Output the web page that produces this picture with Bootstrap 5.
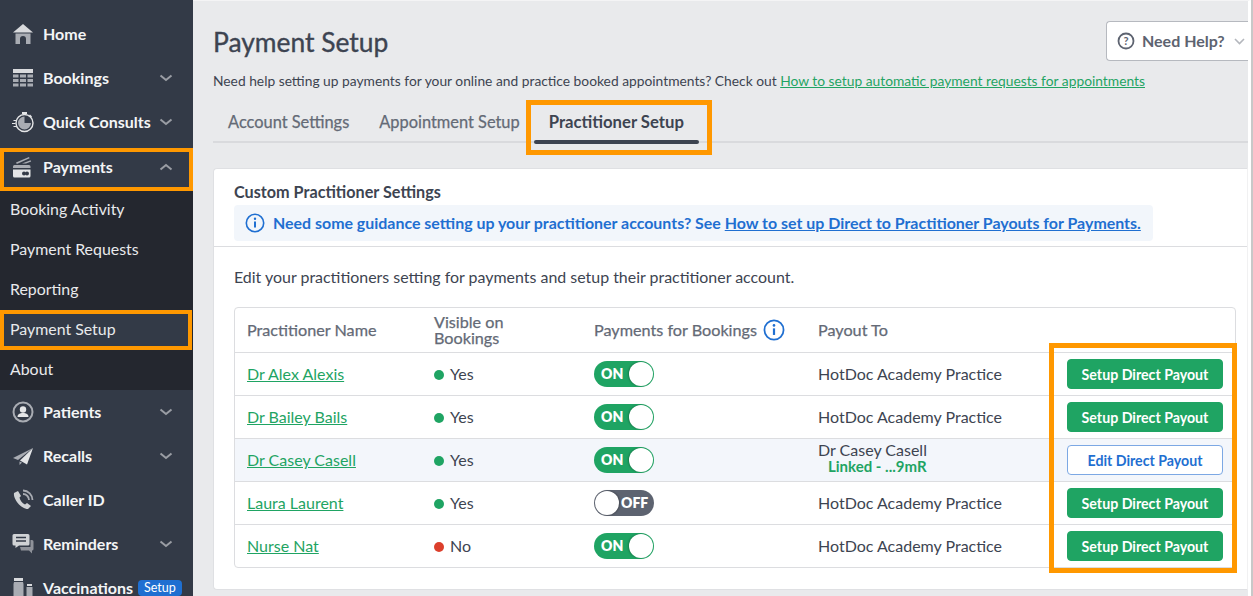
<!DOCTYPE html>
<html lang="en">
<head>
<meta charset="utf-8">
<title>Payment Setup</title>
<link rel="stylesheet" href="https://cdn.jsdelivr.net/npm/bootstrap@5.3.0/dist/css/bootstrap.min.css">
<style>
html,body{height:596px;overflow:hidden}
body{font-family:Lato,"Liberation Sans",sans-serif;background:#fff;color:#3d4451;font-size:16px}
.shell{height:596px;overflow:hidden}
.side{width:193px;flex:none;background:#333a47;color:#fff;padding-top:12px;height:596px;overflow:hidden}
.sitem{height:44px;padding:0 20px 0 12px;font-size:16px;font-weight:700;color:#f4f5f6;position:relative}
.sitem svg.ic{width:22px;height:22px;margin-right:9px;flex:none;fill:#a9acb3}
.sitem .chev{width:14px;height:8px;margin-left:auto;flex:none}
.sitem.hl{border:4px solid #ff9800;margin:4px 0 0;padding:0 16px 5px 8px;height:43px;z-index:1}
.subs{background:#24272f;height:201px;margin-top:-2px}
.sub{height:40px;padding-left:10px;font-size:15.9px;color:#e9eaec;line-height:1}
.sub.hl{border:4px solid #ff9800;padding:0 0 2px 6px;margin:1px 1px -1px 0;background:#333a47}
.tagsetup{background:#1f6fd1;color:#fff;font-size:12.5px;border-radius:4px;padding:1px 6px;font-weight:400;margin-left:5px;line-height:14px}
.mainp{flex:1;background:#e9eaec;padding-left:20px;height:596px;overflow:hidden;position:relative;border-top:1px solid #f4f4f5;border-right:3px solid #fff}
.sbar{width:2px;flex:none;background:#c8c8c8}
.ptitle{font-size:26.4px;font-weight:400;-webkit-text-stroke:.35px #3d4451;margin:0;line-height:32px;color:#3d4451;padding-top:25px;box-sizing:content-box}
.helpb{position:absolute;top:20px;right:0;width:142px;height:40px;background:#fff;border:1px solid #b6b9bf;border-right:0;border-radius:4px 0 0 4px;color:#5d6370;font-size:16px;font-weight:700;padding-left:10px}
.helpb svg{width:18px;height:18px;margin-right:7px}
.helpb .hc{width:11px;height:7px;margin-left:9px;margin-right:0}
.leadp{font-size:13.8px;margin:14px 0 0;line-height:18px;color:#3d4451}
.lnk{color:#1fa463;text-decoration:underline}
.ttabs{height:53px;border-bottom:2px solid #d9dadd}
.tabi{font-size:16.4px;color:#646a76;-webkit-text-stroke:.25px #646a76;padding:14px 15px 0;line-height:36px}
.tabi.act{position:relative;font-weight:700;font-size:16.7px;color:#3d4451;-webkit-text-stroke:0;border:5px solid #ff9800;height:55px;flex:none;margin:10px 0 0 -9px;padding:0 0 0 18px;line-height:34px;width:186px}
.tabi.act::after{content:"";position:absolute;left:3px;right:8px;bottom:6px;height:4px;background:#3d4451;border-radius:2px}
.pcard{background:#fff;border:1px solid #dfe0e3;border-right-color:#f1f1f2;border-radius:4px 0 0 4px;margin-top:25px;height:422px}
.phead{height:78px;border-bottom:1px solid #dcdde0;padding:14px 20px 0}
.phead h2{font-size:16.2px;font-weight:700;margin:0;line-height:17px;color:#3d4451}
.guide{background:#f2f6fb;border-radius:4px;color:#1f6fd1;font-weight:700;font-size:15.95px;height:36px;margin-top:5px;width:919px;padding-left:11px;white-space:nowrap}
.guide svg{width:20px;height:20px;margin-right:8px;flex:none}
.guide a{color:#1f6fd1}
.intro{font-size:15.95px;margin:20px 20px 20px;line-height:20px;color:#3d4451}
.tbox{margin:0 11px 0 20px;border:1px solid #dcdde0;border-radius:4px;position:relative;height:261px}
.trow{height:43px;border-top:1px solid #dcdde0;display:grid;grid-template-columns:187px 160px 224px 1fr 168px;align-items:center;padding-left:12px}
.trow.thd{height:44px;border-top:0;color:#646a76;font-size:16.2px;-webkit-text-stroke:.25px #646a76;line-height:16px;padding-bottom:1px}
.trow.alt{background:#f3f6fb}
.trow a{color:#1fa463}
.dotg,.dotr{display:inline-block;width:10px;height:10px;border-radius:50%;margin-right:6px}
.dotg{background:#1fa463}.dotr{background:#dc3f2c}
.tgl{display:inline-flex;align-items:center;width:60px;height:26px;border-radius:13px;background:#1fa463;color:#fff;font-weight:800;font-size:14px;position:relative;padding:0 0 2px 7px;vertical-align:middle}
.tgl i{position:absolute;right:1px;top:1px;width:24px;height:24px;border-radius:50%;background:#fff;box-shadow:-1px 0 2px rgba(0,0,0,.25)}
.tgl.off{background:#5d6370;padding-left:27px}
.tgl.off i{right:auto;left:1px;box-shadow:1px 0 2px rgba(0,0,0,.3)}
.linked{color:#1fa463;font-weight:700;font-size:15px;padding-left:10px;line-height:17px}
.pay2{line-height:17px;padding-bottom:5px}
.btnp{width:156px;height:30px;font-size:14.2px;font-weight:700;padding:1px 0 0;border-radius:4px;line-height:28px}
.btng,.btng:hover{background:#1fa463;border:1px solid #1fa463;color:#fff}
.btnw,.btnw:hover{background:#fff;border:1px solid #7ca8e4;color:#1f6fd1}
.hlcol{position:absolute;left:814px;top:35px;width:188px;height:230px;border:5px solid #ff9800;pointer-events:none}
.infoh{margin-left:6px}
</style>
</head>
<body>
<div class="shell d-flex">
  <nav class="side">
    <div class="sitem d-flex align-items-center"><svg class="ic" viewBox="0 0 22 22"><path fill="#d9dadd" d="M11 1 1 9.500h20z"/><path d="M3.500 10.500h15V21h-4.500v-5a3 3 0 0 0-6 0v5H3.500z"/></svg>Home</div>
    <div class="sitem d-flex align-items-center"><svg class="ic" viewBox="0 0 22 22"><path fill="#d9dadd" d="M1 2h20v4H1z"/><path d="M1 7.500h5.500v3H1zM8 7.500h6v3H8zM15.500 7.500H21v3h-5.500zM1 12h5.500v3H1zM8 12h6v3H8zM15.500 12H21v3h-5.500zM1 16.500h5.500v3H1zM8 16.500h6v3H8zM15.500 16.500H21v3h-5.500z"/></svg>Bookings<svg class="chev" viewBox="0 0 14 8"><path d="M1.500 1.500 7 6l5.500-4.500" fill="none" stroke="#9a9da4" stroke-width="2"/></svg></div>
    <div class="sitem d-flex align-items-center"><svg class="ic" viewBox="0 0 22 22"><circle cx="12.500" cy="12" r="8.500" fill="none" stroke="#e4e5e7" stroke-width="1.400"/><path d="M12.500 5.500a6.500 6.500 0 1 0 6.500 6.500h-6.500z"/><path d="M1.500 9.500h3M0 12.500h3.500M1.500 15.500h3" fill="none" stroke="#e4e5e7" stroke-width="1.200"/><path fill="#e4e5e7" d="M10 1h5v2h-5zM18 3.500l2 2-1 1-2-2z"/></svg>Quick Consults<svg class="chev" viewBox="0 0 14 8"><path d="M1.500 1.500 7 6l5.500-4.500" fill="none" stroke="#9a9da4" stroke-width="2"/></svg></div>
    <div class="sitem hl d-flex align-items-center"><svg class="ic" viewBox="0 0 22 22"><path fill="#a9acb3" d="M4 6.500 17 1l.6 1.300L4.800 8zM10 7.500l8.500-3.300.7 1.400L14 7.500z"/><path fill="#a9acb3" d="M1 10.500a1.500 1.500 0 0 1 1.500-1.500H17a1.500 1.500 0 0 1 1.500 1.500V12H1z"/><path fill="#e4e5e7" d="M1 13.500h17.500V20a1.500 1.500 0 0 1-1.500 1.500H2.500A1.500 1.500 0 0 1 1 20z"/><circle cx="12" cy="17.500" r="2" fill="#333a47"/><circle cx="15" cy="17.500" r="2" fill="#333a47"/></svg>Payments<svg class="chev" viewBox="0 0 14 8"><path d="M1.500 6.500 7 2l5.500 4.500" fill="none" stroke="#9a9da4" stroke-width="2"/></svg></div>
    <div class="subs">
      <div class="sub d-flex align-items-center">Booking Activity</div>
      <div class="sub d-flex align-items-center">Payment Requests</div>
      <div class="sub d-flex align-items-center">Reporting</div>
      <div class="sub hl d-flex align-items-center">Payment Setup</div>
      <div class="sub d-flex align-items-center">About</div>
    </div>
    <div class="sitem d-flex align-items-center"><svg class="ic" viewBox="0 0 22 22"><circle cx="11" cy="11" r="9.500" fill="none" stroke="#a9acb3" stroke-width="2"/><circle cx="11" cy="8.500" r="3.200" fill="#e4e5e7"/><path fill="#e4e5e7" d="M5.500 16c0-3 2.500-4 5.500-4s5.500 1 5.500 4z"/></svg>Patients<svg class="chev" viewBox="0 0 14 8"><path d="M1.500 1.500 7 6l5.500-4.500" fill="none" stroke="#9a9da4" stroke-width="2"/></svg></div>
    <div class="sitem d-flex align-items-center"><svg class="ic" viewBox="0 0 22 22"><path fill="#a9acb3" d="M21 3 1 13l5 2z"/><path fill="#e4e5e7" d="M21 3 8 15.500l7 4z"/><path d="M7.500 16.500V20l2.500-2.500z"/></svg>Recalls<svg class="chev" viewBox="0 0 14 8"><path d="M1.500 1.500 7 6l5.500-4.500" fill="none" stroke="#9a9da4" stroke-width="2"/></svg></div>
    <div class="sitem d-flex align-items-center"><svg class="ic" viewBox="0 0 22 22"><path fill="#d0d2d5" d="M6 2 2 4c-1 6 7 16 14 16l3-3-4-3-2 1.500C10 14 8 11 7.500 8.500L9 7z"/><path d="M11 5a6 6 0 0 1 6 6M11 1.500a9.500 9.500 0 0 1 9.500 9.500" fill="none" stroke="#a9acb3" stroke-width="1.800"/></svg>Caller ID</div>
    <div class="sitem d-flex align-items-center"><svg class="ic" viewBox="0 0 22 22"><path fill="#d0d2d5" d="M2 1h14a1.500 1.500 0 0 1 1.500 1.500V11a1.500 1.500 0 0 1-1.500 1.500H7L3.500 15v-2.500H2A1.500 1.500 0 0 1 .5 11V2.500A1.500 1.500 0 0 1 2 1z"/><path d="M4 4.500h10M4 8h10" stroke="#333a47" stroke-width="1.500"/><path fill="#8f929a" d="M18.500 7H20a1.500 1.500 0 0 1 1.500 1.500V16a1.500 1.500 0 0 1-1.500 1.500v3L17 17.500H9l-1-3.500h10.500z"/></svg>Reminders<svg class="chev" viewBox="0 0 14 8"><path d="M1.500 1.500 7 6l5.500-4.500" fill="none" stroke="#9a9da4" stroke-width="2"/></svg></div>
    <div class="sitem d-flex align-items-center"><svg class="ic" viewBox="0 0 22 22"><path fill="#d9dadd" d="M2 1h9v3H2z"/><path d="M2 5h9l.5 2v14h-10V7z"/><path fill="#d9dadd" d="M15 7h5v2h-5z"/><path d="M14.500 10h6v11h-6z"/></svg>Vaccinations<span class="tagsetup">Setup</span></div>
  </nav>
  <main class="mainp">
    <h1 class="ptitle">Payment Setup</h1>
    <div class="helpb d-flex align-items-center"><svg viewBox="0 0 18 18"><circle cx="9" cy="9" r="7.500" fill="none" stroke="#5d6370" stroke-width="1.800"/><text x="9" y="13" font-size="11" font-weight="700" text-anchor="middle" fill="#5d6370" font-family="Lato">?</text></svg>Need Help?<svg class="hc" viewBox="0 0 11 7"><path d="M1 1l4.500 4.500L10 1" fill="none" stroke="#b4b7bd" stroke-width="1.600"/></svg></div>
    <p class="leadp">Need help setting up payments for your online and practice booked appointments? Check out <a class="lnk" href="#">How to setup automatic payment requests for appointments</a></p>
    <div class="ttabs d-flex">
      <div class="tabi">Account Settings</div>
      <div class="tabi">Appointment Setup</div>
      <div class="tabi act">Practitioner Setup</div>
    </div>
    <section class="pcard">
      <div class="phead">
        <h2>Custom Practitioner Settings</h2>
        <div class="guide d-flex align-items-center"><svg viewBox="0 0 20 20"><circle cx="10" cy="10" r="8.700" fill="none" stroke="#1f6fd1" stroke-width="1.600"/><path d="M10 8.500v6" stroke="#1f6fd1" stroke-width="2"/><circle cx="10" cy="5.800" r="1.200" fill="#1f6fd1"/></svg><span>Need some guidance setting up your practitioner accounts? See <a href="#">How to set up Direct to Practitioner Payouts for Payments.</a></span></div>
      </div>
      <p class="intro">Edit your practitioners setting for payments and setup their practitioner account.</p>
      <div class="tbox">
        <div class="trow thd"><div>Practitioner Name</div><div>Visible on<br>Bookings</div><div class="d-flex align-items-center">Payments for Bookings<svg class="infoh" width="22" height="22" viewBox="0 0 20 20"><circle cx="10" cy="10" r="8.700" fill="none" stroke="#1f6fd1" stroke-width="1.600"/><path d="M10 8.500v6" stroke="#1f6fd1" stroke-width="2"/><circle cx="10" cy="5.800" r="1.200" fill="#1f6fd1"/></svg></div><div>Payout To</div><div></div></div>
        <div class="trow"><a href="#">Dr Alex Alexis</a><div><span class="dotg"></span>Yes</div><div><span class="tgl">ON<i></i></span></div><div>HotDoc Academy Practice</div><div><button class="btn btnp btng">Setup Direct Payout</button></div></div>
        <div class="trow"><a href="#">Dr Bailey Bails</a><div><span class="dotg"></span>Yes</div><div><span class="tgl">ON<i></i></span></div><div>HotDoc Academy Practice</div><div><button class="btn btnp btng">Setup Direct Payout</button></div></div>
        <div class="trow alt"><a href="#">Dr Casey Casell</a><div><span class="dotg"></span>Yes</div><div><span class="tgl">ON<i></i></span></div><div class="pay2">Dr Casey Casell<div class="linked">Linked - ...9mR</div></div><div><button class="btn btnp btnw">Edit Direct Payout</button></div></div>
        <div class="trow"><a href="#">Laura Laurent</a><div><span class="dotg"></span>Yes</div><div><span class="tgl off">OFF<i></i></span></div><div>HotDoc Academy Practice</div><div><button class="btn btnp btng">Setup Direct Payout</button></div></div>
        <div class="trow"><a href="#">Nurse Nat</a><div><span class="dotr"></span>No</div><div><span class="tgl">ON<i></i></span></div><div>HotDoc Academy Practice</div><div><button class="btn btnp btng">Setup Direct Payout</button></div></div>
        <div class="hlcol"></div>
      </div>
    </section>
  </main>
  <div class="sbar"></div>
</div>
<script src="https://cdn.jsdelivr.net/npm/bootstrap@5.3.0/dist/js/bootstrap.bundle.min.js"></script>
</body>
</html>
